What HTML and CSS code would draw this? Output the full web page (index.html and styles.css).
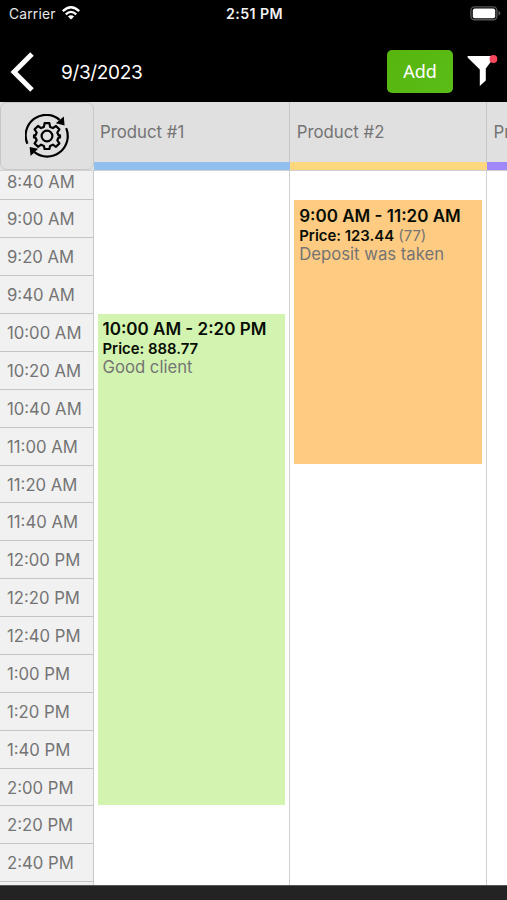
FILE: index.html
```html
<!DOCTYPE html>
<html lang="en">
<head>
<meta charset="utf-8">
<title>Schedule</title>
<link rel="stylesheet" href="styles.css">
</head>
<body>
<div class="app">
  <div class="status">
    <div class="carrier">
      <span>Carrier</span>
      <svg class="wifi" viewBox="0 0 18 14" width="18" height="14" fill="none" stroke="#fff" stroke-width="2.3">
        <path d="M.8 5.2Q9-2.6 17.2 5.2"/>
        <path d="M3.8 8.4Q9 3.4 14.2 8.4"/>
        <path d="M9 13.6L5.9 10.5Q9 8 12.1 10.5Z" fill="#fff" stroke="none"/>
      </svg>
    </div>
    <span class="clock">2:51 PM</span>
    <svg class="battery" viewBox="0 0 31 15" width="31" height="15">
      <rect x=".9" y=".9" width="26" height="12.8" rx="3.6" fill="#000" stroke="#555" stroke-width="1.4"/>
      <rect x="2.8" y="2.4" width="22.4" height="9.8" rx="2" fill="#fff"/>
      <path d="M28.5 4.8Q30.4 5.6 30.4 7.3T28.5 9.8Z" fill="#555"/>
    </svg>
  </div>
  <header class="nav">
    <svg class="back" viewBox="0 0 24 42" width="24" height="42" fill="none" stroke="#fff" stroke-width="5">
      <path d="M22 3L4 21L22 39"/>
    </svg>
    <h1 class="date">9/3/2023</h1>
    <button class="add">Add</button>
    <svg class="filter" viewBox="0 0 32 32" width="32" height="32">
      <path d="M1.6 1H27.5V3.2L19.8 13.6V25.5L13.8 31V14.6L1.6 2.4Z" fill="#fff"/>
      <circle cx="27.4" cy="4" r="3.9" fill="#f9475c"/>
    </svg>
  </header>
  <div class="heads">
    <div class="sync">
      <svg viewBox="0 0 44 44" width="44" height="44" fill="none" stroke="#000" stroke-width="2.2">
        <path d="M2.4 29.8A20.6 20.6 0 0 1 34.6 5.8"/>
        <path d="M41.2 14.2A20.6 20.6 0 0 1 9.4 38.2"/>
        <path d="M38.8 2.4L39.6 11.4L30.8 9.2Z" fill="#000" stroke="none"/>
        <path d="M4.6 33L13.2 34.8L5.6 42Z" fill="#000" stroke="none"/>
        <circle cx="22" cy="22" r="5.4"/>
        <path stroke-linejoin="round" d="M19.6 9.2H24.4L25.1 12.9L27.9 14.1L31 12L34.4 15.4L32.3 18.5L33.5 21.2L35 21.4V23.4L33.5 23.7L32.3 26.3L34.4 29.4L31 32.8L27.9 30.7L25.1 31.9L24.4 35H19.6L18.9 31.9L16.1 30.7L13 32.8L9.6 29.4L11.7 26.3L10.5 23.7L9 23.4V21.4L10.5 21.2L11.7 18.5L9.6 15.4L13 12L16.1 14.1L18.9 12.9Z"/>
      </svg>
    </div>
    <div class="head blue">Product #1</div>
    <div class="head yellow">Product #2</div>
    <div class="head violet">Pr</div>
  </div>
  <main class="grid">
    <div class="times">
      <div>8:40 AM</div><div>9:00 AM</div><div>9:20 AM</div><div>9:40 AM</div>
      <div>10:00 AM</div><div>10:20 AM</div><div>10:40 AM</div><div>11:00 AM</div>
      <div>11:20 AM</div><div>11:40 AM</div><div>12:00 PM</div><div>12:20 PM</div>
      <div>12:40 PM</div><div>1:00 PM</div><div>1:20 PM</div><div>1:40 PM</div>
      <div>2:00 PM</div><div>2:20 PM</div><div>2:40 PM</div>
    </div>
    <div class="lane">
      <article class="event green">
        <strong class="span">10:00 AM - 2:20 PM</strong>
        <div class="price"><b>Price: 888.77</b></div>
        <p class="note">Good client</p>
      </article>
    </div>
    <div class="lane">
      <article class="event orange">
        <strong class="span">9:00 AM - 11:20 AM</strong>
        <div class="price"><b>Price: 123.44</b> (77)</div>
        <p class="note">Deposit was taken</p>
      </article>
    </div>
    <div class="lane"></div>
  </main>
  <footer class="bottom"></footer>
</div>
</body>
</html>
```
FILE: styles.css
```css
* { box-sizing: border-box; }
body {
  margin: 0;
  background: #000;
  font-family: Inter, "Liberation Sans", sans-serif;
  color: #747474;
}
.app {
  width: 507px;
  height: 900px;
  display: flex;
  flex-direction: column;
  overflow: hidden;
}
.status {
  height: 28px;
  flex: none;
  display: grid;
  grid-template-columns: 1fr auto 1fr;
  align-items: center;
  padding: 0 6px 0 9px;
  color: #e8e8e8;
  font-size: 13.8px;
}
.carrier { display: flex; align-items: center; gap: 6px; letter-spacing: .2px; }
.wifi { margin-top: -2px; }
.clock { margin: -1px 0 0 -1px; font-size: 14.2px; font-weight: 600; color: #f2f2f2; letter-spacing: .4px; }
.battery { justify-self: end; margin-top: -2px; }
.nav {
  height: 74px;
  flex: none;
  display: flex;
  align-items: center;
  padding: 13px 9px 0 10px;
  color: #fff;
}
.date { margin: 1px auto 0 27px; font-size: 19px; font-weight: 400; letter-spacing: -.35px; }
.add {
  width: 66px;
  height: 43px;
  margin-right: 13px;
  padding: 0 0 2px;
  border: 0;
  border-radius: 5px;
  background: linear-gradient(135deg, #57b50d, #5abd18);
  color: #fff;
  font: 400 18px "Noto Sans", sans-serif;
}
.filter { margin-top: -2px; }
.heads {
  height: 68px;
  flex: none;
  display: flex;
  background: #e0e0e0;
  overflow: hidden;
}
.sync {
  width: 93.5px;
  flex: none;
  display: flex;
  align-items: center;
  justify-content: center;
  border: 1px solid #c8c8c8;
  border-radius: 7px;
}
.head {
  width: 196.75px;
  flex: none;
  display: flex;
  align-items: center;
  padding-left: 6.5px;
  border-bottom: 8px solid;
  box-shadow: inset -1px 0 #c6c6c6;
  font-size: 16.8px;
}
.blue { border-color: #91bff0; }
.yellow { border-color: #fdd77e; }
.violet { border-color: #a188f8; }
.grid {
  height: 715px;
  flex: none;
  display: flex;
  overflow: hidden;
  background: #fff;
  border-top: 1px solid #cfcfcf;
}
.times {
  width: 93.5px;
  flex: none;
  margin-top: -8.4px;
  border-right: 1px solid #c8c8c8;
  background: #f1f1f1;
  font-size: 16.7px;
}
.times div {
  height: 37.88px;
  padding-left: 7px;
  line-height: 39px;
  border-bottom: 1px solid #c4c4c4;
}
.lane {
  width: 196.75px;
  flex: none;
  padding: 0 4.5px 0 4px;
  border-right: 1px solid #cfcfcf;
}
.event { padding: 7px 5px; }
.green { margin-top: 143.4px; height: 490.6px; padding-top: 6px; background: #d3f4b0; }
.orange { margin-top: 29.4px; height: 264px; background: #fecb83; }
.span { display: block; color: #080d04; font-size: 17px; font-weight: 600; line-height: 19.5px; }
.price { font-size: 14.9px; line-height: 18px; }
.price b { color: #080d04; font-weight: 600; }
.note { margin: 0; font-size: 16.7px; line-height: 19px; }
.bottom { height: 15px; flex: none; background: #242323; border-top: 1px solid #555; }
```
